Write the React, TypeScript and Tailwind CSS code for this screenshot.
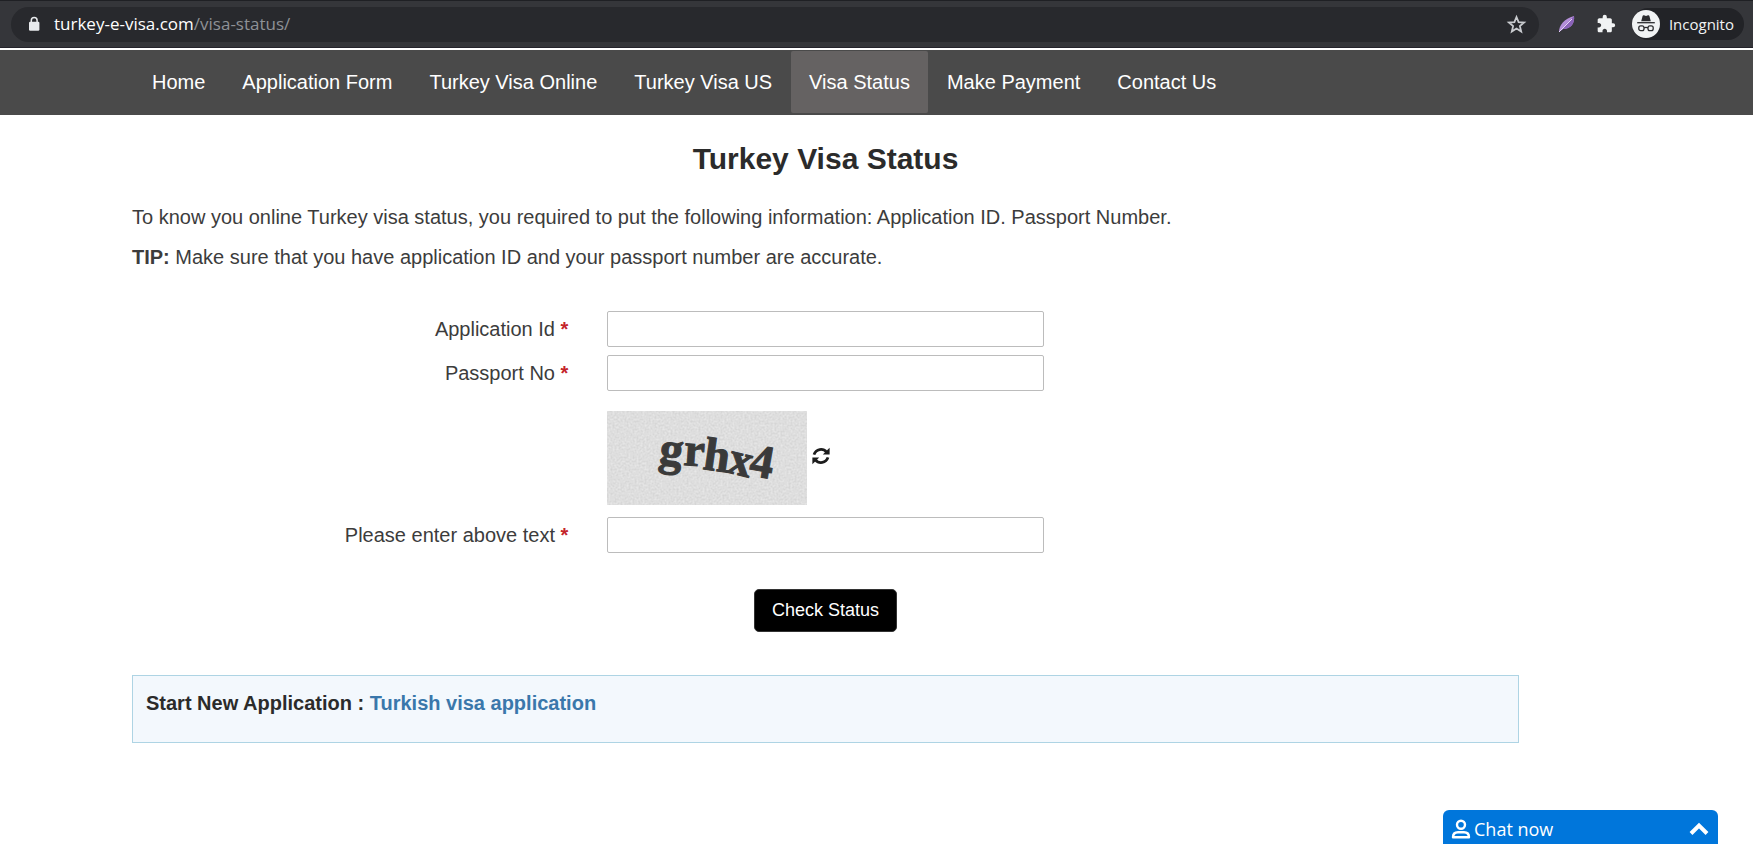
import { useState, type FormEvent } from 'react';
import { MdExtension } from 'react-icons/md';

const NAV_LINKS = [
  { label: 'Home', href: '/' },
  { label: 'Application Form', href: '/application-form/' },
  { label: 'Turkey Visa Online', href: '/turkey-visa-online/' },
  { label: 'Turkey Visa US', href: '/turkey-visa-us/' },
  { label: 'Visa Status', href: '/visa-status/' },
  { label: 'Make Payment', href: '/make-payment/' },
  { label: 'Contact Us', href: '/contact-us/' },
];

const ACTIVE_LINK = 'Visa Status';

function LockIcon() {
  return (
    <svg viewBox="0 0 18 18" className="size-[18px]" aria-hidden="true">
      <rect x="4" y="6.8" width="10.4" height="9" rx="1.2" fill="#e8eaed" />
      <path d="M6.3 7.5V5.4A2.9 2.9 0 0 1 12.1 5.4V7.5" fill="none" stroke="#e8eaed" strokeWidth="1.5" />
    </svg>
  );
}

function StarIcon() {
  return (
    <svg viewBox="0 0 21 21" className="size-[21px]" aria-hidden="true">
      <path
        d="M10.5 3L12.6 8.1L18.1 8.5L13.9 12.1L15.2 17.5L10.5 14.6L5.8 17.5L7.1 12.1L2.9 8.5L8.4 8.1Z"
        fill="none"
        stroke="#c9cbcf"
        strokeWidth="1.8"
      />
    </svg>
  );
}

function FeatherIcon() {
  return (
    <svg viewBox="0 0 18 18" className="size-[18px]" aria-hidden="true">
      <path d="M1 17C1 10 6 4 16 1C17 8 13 14 5 14Z" fill="#b48fd9" />
      <path d="M1 17L16 1C17 8 13 14 5 14Z" fill="#8a62b8" />
      <path d="M1 17L14 4" stroke="#e5d5f5" strokeWidth="1" />
    </svg>
  );
}

function IncognitoIcon() {
  return (
    <svg viewBox="0 0 28 28" className="size-7" aria-hidden="true">
      <circle cx="14" cy="14" r="14" fill="#f1f3f4" />
      <path d="M9.2 11.2L10.6 6Q10.9 5 12 5.3L14 5.9L16 5.3Q17.1 5 17.4 6L18.8 11.2Z" fill="#2a2b2e" />
      <path d="M5.2 12.7H22.8" stroke="#2a2b2e" strokeWidth="1.3" />
      <g fill="none" stroke="#2a2b2e" strokeWidth="1.3">
        <rect x="6.8" y="15.9" width="5.2" height="4.8" rx="1.9" />
        <rect x="16" y="15.9" width="5.2" height="4.8" rx="1.9" />
        <path d="M12 17.8Q14 16.8 16 17.8" />
      </g>
    </svg>
  );
}

function RefreshIcon() {
  return (
    <svg viewBox="0 0 18 18" className="size-[18px]" aria-hidden="true">
      <g fill="none" stroke="#1c1c1c" strokeWidth="2.8">
        <path d="M2 7.6C4 1.8 11 0.8 14.6 5.2" />
        <path d="M16 10.4C14 16.2 7 17.2 3.4 12.8" />
      </g>
      <path d="M17.6 0.8V7.6H10.8Z" fill="#1c1c1c" />
      <path d="M0.4 17.2V10.4H7.2Z" fill="#1c1c1c" />
    </svg>
  );
}

function PersonIcon() {
  return (
    <svg viewBox="0 0 20 20" className="size-5" fill="none" stroke="#fff" strokeWidth="2.4" aria-hidden="true">
      <circle cx="10" cy="5.7" r="4" />
      <path d="M2 18.2C2 14.8 4 13.2 7 13.2H13C16 13.2 18 14.8 18 18.2Z" strokeLinejoin="round" />
    </svg>
  );
}

function Captcha() {
  return (
    <svg viewBox="0 0 200 94" className="h-[94px] w-[200px]" role="img" aria-label="Captcha">
      <filter id="grain" x="0" y="0" width="100%" height="100%" colorInterpolationFilters="sRGB">
        <feTurbulence type="fractalNoise" baseFrequency="0.5" numOctaves="2" seed="4" />
        <feColorMatrix values="0.12 0 0 0 0.81  0.12 0 0 0 0.81  0.12 0 0 0 0.81  0 0 0 0 1" />
      </filter>
      <rect width="200" height="94" fill="#dedede" />
      <rect width="200" height="94" filter="url(#grain)" />
      <text
        x="51 76 95 119 141"
        y="52 54 58 61 64"
        rotate="8 4 8 14 10"
        fontFamily='"Liberation Serif", serif'
        fontWeight="700"
        fontSize="47"
        fill="#3a3a3a"
        stroke="#3a3a3a"
        strokeWidth="1"
      >
        grhx4
      </text>
    </svg>
  );
}

function BrowserBar() {
  return (
    <div className="flex h-12 items-center border-t border-b border-t-[#1f2024] border-b-[#24232b] bg-[#35363a] pr-[9px] pl-[11px] font-['Open_Sans','Noto_Sans',sans-serif]">
      <div className="flex h-[35px] flex-1 items-center rounded-full bg-[#28292d] pr-3 pl-[14px]">
        <LockIcon />
        <p className="ml-[11px] flex-1 text-[17px] text-[#8e9196]">
          <span className="text-white">turkey-e-visa.com</span>/visa-status/
        </p>
        <button type="button" aria-label="Bookmark this page">
          <StarIcon />
        </button>
      </div>
      <button type="button" aria-label="Feather extension" className="ml-[19px]">
        <FeatherIcon />
      </button>
      <button type="button" aria-label="Extensions" className="ml-5">
        <MdExtension className="size-5 text-[#f1f3f4]" />
      </button>
      <div className="ml-4 flex h-8 items-center gap-[9px] rounded-full bg-[#222327] pr-[10px]">
        <IncognitoIcon />
        <span className="text-[15px] text-[#f1f3f4]">Incognito</span>
      </div>
    </div>
  );
}

function NavBar() {
  return (
    <nav className="mt-[2px] bg-[#4a4a4a] pt-px pb-[2px] pl-[134px]">
      <ul className="flex gap-px">
        {NAV_LINKS.map((link) => (
          <li key={link.label}>
            <a
              href={link.href}
              className={`block rounded-xs px-[18px] pt-[17px] pb-[17px] text-xl text-white ${
                link.label === ACTIVE_LINK ? 'bg-[#656262]' : ''
              }`}
            >
              {link.label}
            </a>
          </li>
        ))}
      </ul>
    </nav>
  );
}

interface FieldProps {
  id: string;
  label: string;
  value: string;
  onChange: (value: string) => void;
}

function Field({ id, label, value, onChange }: FieldProps) {
  return (
    <div className="grid grid-cols-3 items-center gap-x-[39px]">
      <label htmlFor={id} className="text-right">
        {label} <span className="font-bold text-[#c4242b]">*</span>
      </label>
      <input
        id={id}
        type="text"
        value={value}
        onChange={(e) => onChange(e.target.value)}
        className="h-9 rounded-xs border border-[#bcbcbc] px-3"
      />
    </div>
  );
}

function StatusForm() {
  const [applicationId, setApplicationId] = useState('');
  const [passportNo, setPassportNo] = useState('');
  const [captchaText, setCaptchaText] = useState('');

  const handleSubmit = (e: FormEvent) => {
    e.preventDefault();
  };

  return (
    <form onSubmit={handleSubmit} className="mt-10">
      <div className="flex flex-col gap-2">
        <Field id="application-id" label="Application Id" value={applicationId} onChange={setApplicationId} />
        <Field id="passport-no" label="Passport No" value={passportNo} onChange={setPassportNo} />
      </div>

      <div className="mt-5 mb-3 grid grid-cols-3 gap-x-[39px]">
        <div className="col-start-2 flex items-center gap-[5px]">
          <Captcha />
          <button type="button" aria-label="Refresh captcha" className="pb-1" onClick={() => setCaptchaText('')}>
            <RefreshIcon />
          </button>
        </div>
      </div>

      <Field id="captcha-text" label="Please enter above text" value={captchaText} onChange={setCaptchaText} />

      <div className="mt-9 flex justify-center">
        <button
          type="submit"
          className="h-[43px] rounded-[5px] border border-[#333] bg-black px-[17px] pb-px text-lg text-white"
        >
          Check Status
        </button>
      </div>
    </form>
  );
}

function ChatWidget() {
  return (
    <button
      type="button"
      className="fixed right-[35px] bottom-0 flex h-[34px] w-[275px] items-center rounded-t-md bg-[#0076db] pt-1 pr-[9px] pl-2 font-['Open_Sans','Noto_Sans',sans-serif] text-lg text-white"
    >
      <PersonIcon />
      <span className="ml-[3px]">Chat now</span>
      <svg viewBox="0 0 20 14" className="ml-auto h-[14px] w-5" fill="none" stroke="#fff" strokeWidth="4" aria-hidden="true">
        <path d="M2 11.5L10 3.5L18 11.5" />
      </svg>
    </button>
  );
}

export default function App() {
  return (
    <div className="min-h-screen bg-white font-['Liberation_Sans',Arial,sans-serif] text-xl text-[#3c3c3c]">
      <BrowserBar />
      <NavBar />

      <main className="mr-[234px] ml-[132px] pt-6">
        <h1 className="text-center text-3xl leading-10 font-bold text-[#2b2b2b]">Turkey Visa Status</h1>
        <p className="mt-6">
          To know you online Turkey visa status, you required to put the following information: Application ID.
          Passport Number.
        </p>
        <p className="mt-3">
          <strong>TIP:</strong> Make sure that you have application ID and your passport number are accurate.
        </p>

        <StatusForm />

        <div className="mt-[43px] border border-[#aed4e4] bg-[#f3f8fd] px-[13px] pt-[13px] pb-[25px] font-bold text-[#2b2b2b]">
          Start New Application :{' '}
          <a href="/application-form/" className="text-[#3a77ab]">
            Turkish visa application
          </a>
        </div>
      </main>

      <ChatWidget />
    </div>
  );
}
